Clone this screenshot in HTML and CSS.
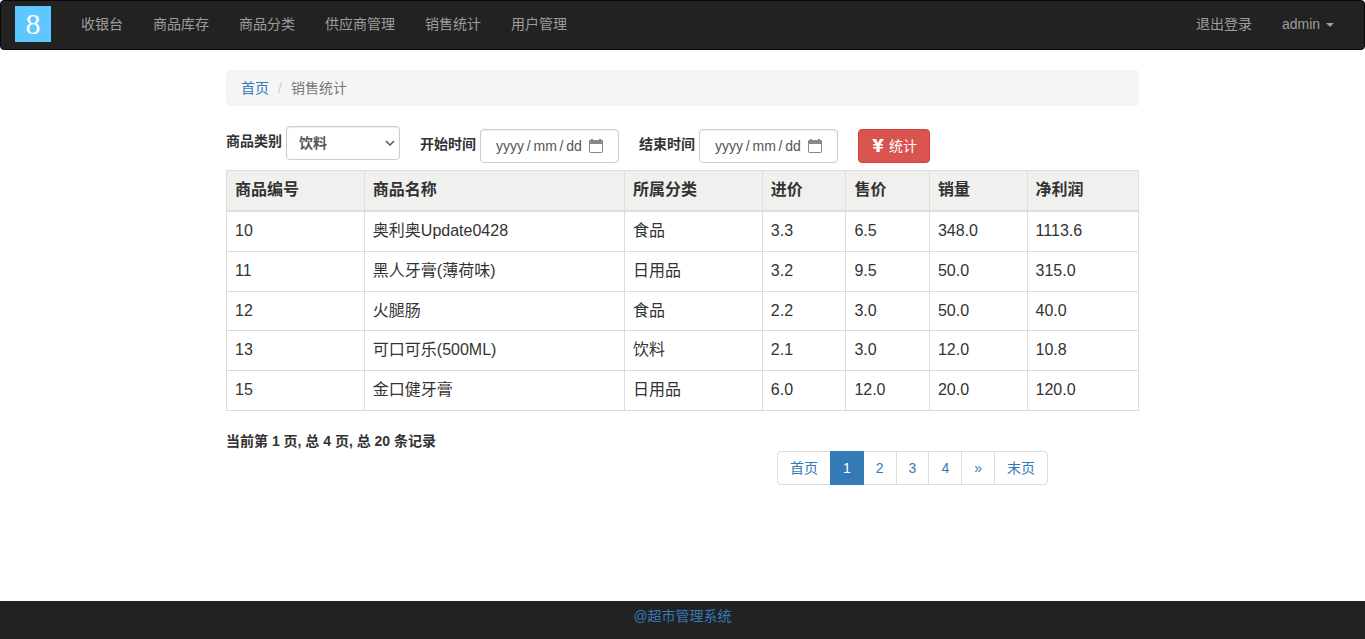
FILE: index.html
```
<!DOCTYPE html>
<html lang="zh-CN">
<head>
    <meta charset="UTF-8">
    <meta name="viewport" content="width=device-width, initial-scale=1.0">
    <title>销售统计</title>
    <link rel="stylesheet" href="styles.css">
</head>
<body>
    <nav class="navbar">
        <a class="navbar-brand" href="#" aria-label="超市管理系统">
            <svg width="36" height="36" viewBox="0 0 36 36">
                <rect width="36" height="36" fill="#5fc7ff"/>
                <text class="logo-text" x="18" y="28" text-anchor="middle">8</text>
            </svg>
        </a>
        <ul class="nav">
            <li><a href="#">收银台</a></li>
            <li><a href="#">商品库存</a></li>
            <li><a href="#">商品分类</a></li>
            <li><a href="#">供应商管理</a></li>
            <li><a href="#">销售统计</a></li>
            <li><a href="#">用户管理</a></li>
        </ul>
        <ul class="nav navbar-right">
            <li><a href="#">退出登录</a></li>
            <li><a href="#">admin <span class="caret"></span></a></li>
        </ul>
    </nav>

    <main class="container">
        <ol class="breadcrumb">
            <li><a href="#">首页</a></li>
            <li class="active">销售统计</li>
        </ol>

        <!-- 查询条件 -->
        <form class="filter">
            <div class="form-group">
                <label for="category">商品类别</label>
                <select class="form-control" id="category">
                    <option selected>饮料</option>
                    <option>食品</option>
                    <option>日用品</option>
                </select>
            </div>
            <div class="form-group form-group-date">
                <label for="startTime">开始时间</label>
                <div class="form-control date-control">
                    <input type="text" id="startTime" placeholder="yyyy&thinsp;/&thinsp;mm&thinsp;/&thinsp;dd">
                    <button type="button" class="date-btn" aria-label="选择开始时间">
                        <svg width="14" height="14" viewBox="0 0 14 14">
                            <path fill="#888" fill-rule="evenodd" d="M2 0h2v1h6V0h2v1h1a1 1 0 0 1 1 1v10a2 2 0 0 1-2 2H2a2 2 0 0 1-2-2V2a1 1 0 0 1 1-1h1zM1 5v7a1 1 0 0 0 1 1h10a1 1 0 0 0 1-1V5z"/>
                        </svg>
                    </button>
                </div>
            </div>
            <div class="form-group form-group-date">
                <label for="endTime">结束时间</label>
                <div class="form-control date-control">
                    <input type="text" id="endTime" placeholder="yyyy&thinsp;/&thinsp;mm&thinsp;/&thinsp;dd">
                    <button type="button" class="date-btn" aria-label="选择结束时间">
                        <svg width="14" height="14" viewBox="0 0 14 14">
                            <path fill="#888" fill-rule="evenodd" d="M2 0h2v1h6V0h2v1h1a1 1 0 0 1 1 1v10a2 2 0 0 1-2 2H2a2 2 0 0 1-2-2V2a1 1 0 0 1 1-1h1zM1 5v7a1 1 0 0 0 1 1h10a1 1 0 0 0 1-1V5z"/>
                        </svg>
                    </button>
                </div>
            </div>
            <button type="button" class="btn btn-danger">
                <svg width="14" height="14" viewBox="0 0 14 14">
                    <path fill="#fff" d="M1 0h4l2 4 2-4h4l-3.500 5H12v1.500H8.700V8H12v1.500H8.700V13H5.300V9.500H2V8h3.300V6.500H2V5h2.500z"/>
                </svg>
                <span>统计</span>
            </button>
        </form>

        <table class="table">
            <colgroup>
                <col class="col-id">
                <col class="col-name">
                <col class="col-type">
                <col class="col-price">
                <col class="col-price">
                <col class="col-count">
                <col class="col-profit">
            </colgroup>
            <thead>
                <tr>
                    <th>商品编号</th>
                    <th>商品名称</th>
                    <th>所属分类</th>
                    <th>进价</th>
                    <th>售价</th>
                    <th>销量</th>
                    <th>净利润</th>
                </tr>
            </thead>
            <tbody>
                <tr>
                    <td>10</td>
                    <td>奥利奥Update0428</td>
                    <td>食品</td>
                    <td>3.3</td>
                    <td>6.5</td>
                    <td>348.0</td>
                    <td>1113.6</td>
                </tr>
                <tr>
                    <td>11</td>
                    <td>黑人牙膏(薄荷味)</td>
                    <td>日用品</td>
                    <td>3.2</td>
                    <td>9.5</td>
                    <td>50.0</td>
                    <td>315.0</td>
                </tr>
                <tr>
                    <td>12</td>
                    <td>火腿肠</td>
                    <td>食品</td>
                    <td>2.2</td>
                    <td>3.0</td>
                    <td>50.0</td>
                    <td>40.0</td>
                </tr>
                <tr>
                    <td>13</td>
                    <td>可口可乐(500ML)</td>
                    <td>饮料</td>
                    <td>2.1</td>
                    <td>3.0</td>
                    <td>12.0</td>
                    <td>10.8</td>
                </tr>
                <tr>
                    <td>15</td>
                    <td>金口健牙膏</td>
                    <td>日用品</td>
                    <td>6.0</td>
                    <td>12.0</td>
                    <td>20.0</td>
                    <td>120.0</td>
                </tr>
            </tbody>
        </table>

        <!-- 分页 -->
        <div class="page-row">
            <strong>当前第 1 页, 总 4 页, 总 20 条记录</strong>
            <ul class="pagination">
                <li><a href="#">首页</a></li>
                <li class="active"><a href="#">1</a></li>
                <li><a href="#">2</a></li>
                <li><a href="#">3</a></li>
                <li><a href="#">4</a></li>
                <li><a href="#">»</a></li>
                <li><a href="#">末页</a></li>
            </ul>
        </div>
    </main>

    <footer class="footer">
        <a href="#">@超市管理系统</a>
    </footer>
</body>
</html>
```
FILE: styles.css
```
* {
    box-sizing: border-box;
}
body {
    display: flex;
    flex-direction: column;
    min-height: 100vh;
    margin: 0;
    font-family: "Liberation Sans", "Noto Sans CJK SC", sans-serif;
    font-size: 14px;
    line-height: 20px;
    color: #333;
    background-color: #fff;
}
a {
    color: #337ab7;
    text-decoration: none;
}
ul,
ol {
    margin: 0;
    padding: 0;
    list-style: none;
}
input,
button,
select {
    font-family: inherit;
    font-size: inherit;
    line-height: inherit;
}
svg {
    display: block;
}

/* navbar */
.navbar {
    display: flex;
    min-height: 50px;
    margin-bottom: 20px;
    padding: 0 15px 0 14px;
    background-color: #222;
    border: 1px solid #080808;
    border-radius: 4px;
}
.navbar-brand {
    padding: 5px 15px 0 0;
}
.logo-text {
    font-family: "Liberation Serif", serif;
    font-size: 30px;
    fill: #fff;
}
.nav {
    display: flex;
}
.nav a {
    display: block;
    padding: 13px 15px;
    color: #9d9d9d;
}
.nav a:hover {
    color: #fff;
}
.navbar-right {
    margin-left: auto;
}
.caret {
    display: inline-block;
    margin-left: 2px;
    vertical-align: middle;
    border-top: 4px solid;
    border-right: 4px solid transparent;
    border-left: 4px solid transparent;
}

.container {
    width: 100%;
    max-width: 913px;
    margin: 0 auto;
}
.breadcrumb {
    display: flex;
    margin-bottom: 20px;
    padding: 8px 15px;
    background-color: #f5f5f5;
    border-radius: 4px;
}
.breadcrumb .active {
    color: #777;
}
.breadcrumb li + li::before {
    padding: 0 9px;
    color: #ccc;
    content: "/";
}

/* filter form */
.filter {
    display: flex;
    flex-wrap: wrap;
    align-items: flex-end;
    gap: 0 20px;
    min-height: 37px;
    margin-bottom: 7px;
}
.form-group {
    display: flex;
    align-items: flex-start;
    align-self: flex-start;
    gap: 4px;
    font-weight: bold;
}
.form-group label {
    padding-top: 5px;
}
.form-group-date {
    align-self: flex-end;
}
.form-control {
    height: 34px;
    color: #555;
    background-color: #fff;
    border: 1px solid #ccc;
    border-radius: 4px;
    box-shadow: inset 0 1px 1px rgba(0,0,0,0.075);
}
select.form-control {
    width: 114px;
    padding: 6px 12px;
    font-weight: bold;
    background-image: url("data:image/svg+xml,%3Csvg xmlns='http://www.w3.org/2000/svg' width='10' height='6'%3E%3Cpath d='M1 1l4 4 4-4' fill='none' stroke='%23555' stroke-width='1.500'/%3E%3C/svg%3E");
    background-repeat: no-repeat;
    background-position: right 4px center;
    appearance: none;
}
.date-control {
    display: flex;
    align-items: center;
    width: 139px;
    padding: 0 15px;
}
.date-control input {
    flex: 1;
    min-width: 0;
    padding: 0;
    color: #555;
    background: none;
    border: none;
    outline: none;
}
.date-control input::placeholder {
    color: #555;
}
.date-btn {
    padding: 0;
    background: none;
    border: none;
    cursor: pointer;
}
.btn {
    display: flex;
    align-items: center;
    gap: 4px;
    padding: 6px 12px;
    border: 1px solid transparent;
    border-radius: 4px;
    cursor: pointer;
}
.btn-danger {
    color: #fff;
    background-color: #d9534f;
    border-color: #d43f3a;
}

/* table */
.table {
    width: 100%;
    margin-bottom: 20px;
    font-size: 16px;
    line-height: 1.42857;
    table-layout: fixed;
    border-collapse: collapse;
}
.table th,
.table td {
    padding: 8px;
    text-align: left;
    vertical-align: top;
    border: 1px solid #ddd;
}
.table th {
    background-color: #f0f0ee;
    border-bottom-width: 2px;
}
.col-id,
.col-type {
    width: 15.1%;
}
.col-name {
    width: 28.5%;
}
.col-price {
    width: 9.15%;
}
.col-count {
    width: 10.7%;
}
.col-profit {
    width: 12.2%;
}

/* pagination */
.page-row {
    display: flex;
    justify-content: space-between;
    padding-right: 91px;
}
.pagination {
    display: flex;
    margin: 20px 0;
}
.pagination a {
    display: block;
    margin-left: -1px;
    padding: 6px 12px;
    border: 1px solid #ddd;
}
.pagination li:first-child a {
    border-radius: 4px 0 0 4px;
}
.pagination li:last-child a {
    border-radius: 0 4px 4px 0;
}
.pagination .active a {
    position: relative;
    color: #fff;
    background-color: #337ab7;
    border-color: #337ab7;
}

.footer {
    min-height: 38px;
    margin-top: auto;
    padding: 5px 0;
    text-align: center;
    background-color: #222;
}
```
